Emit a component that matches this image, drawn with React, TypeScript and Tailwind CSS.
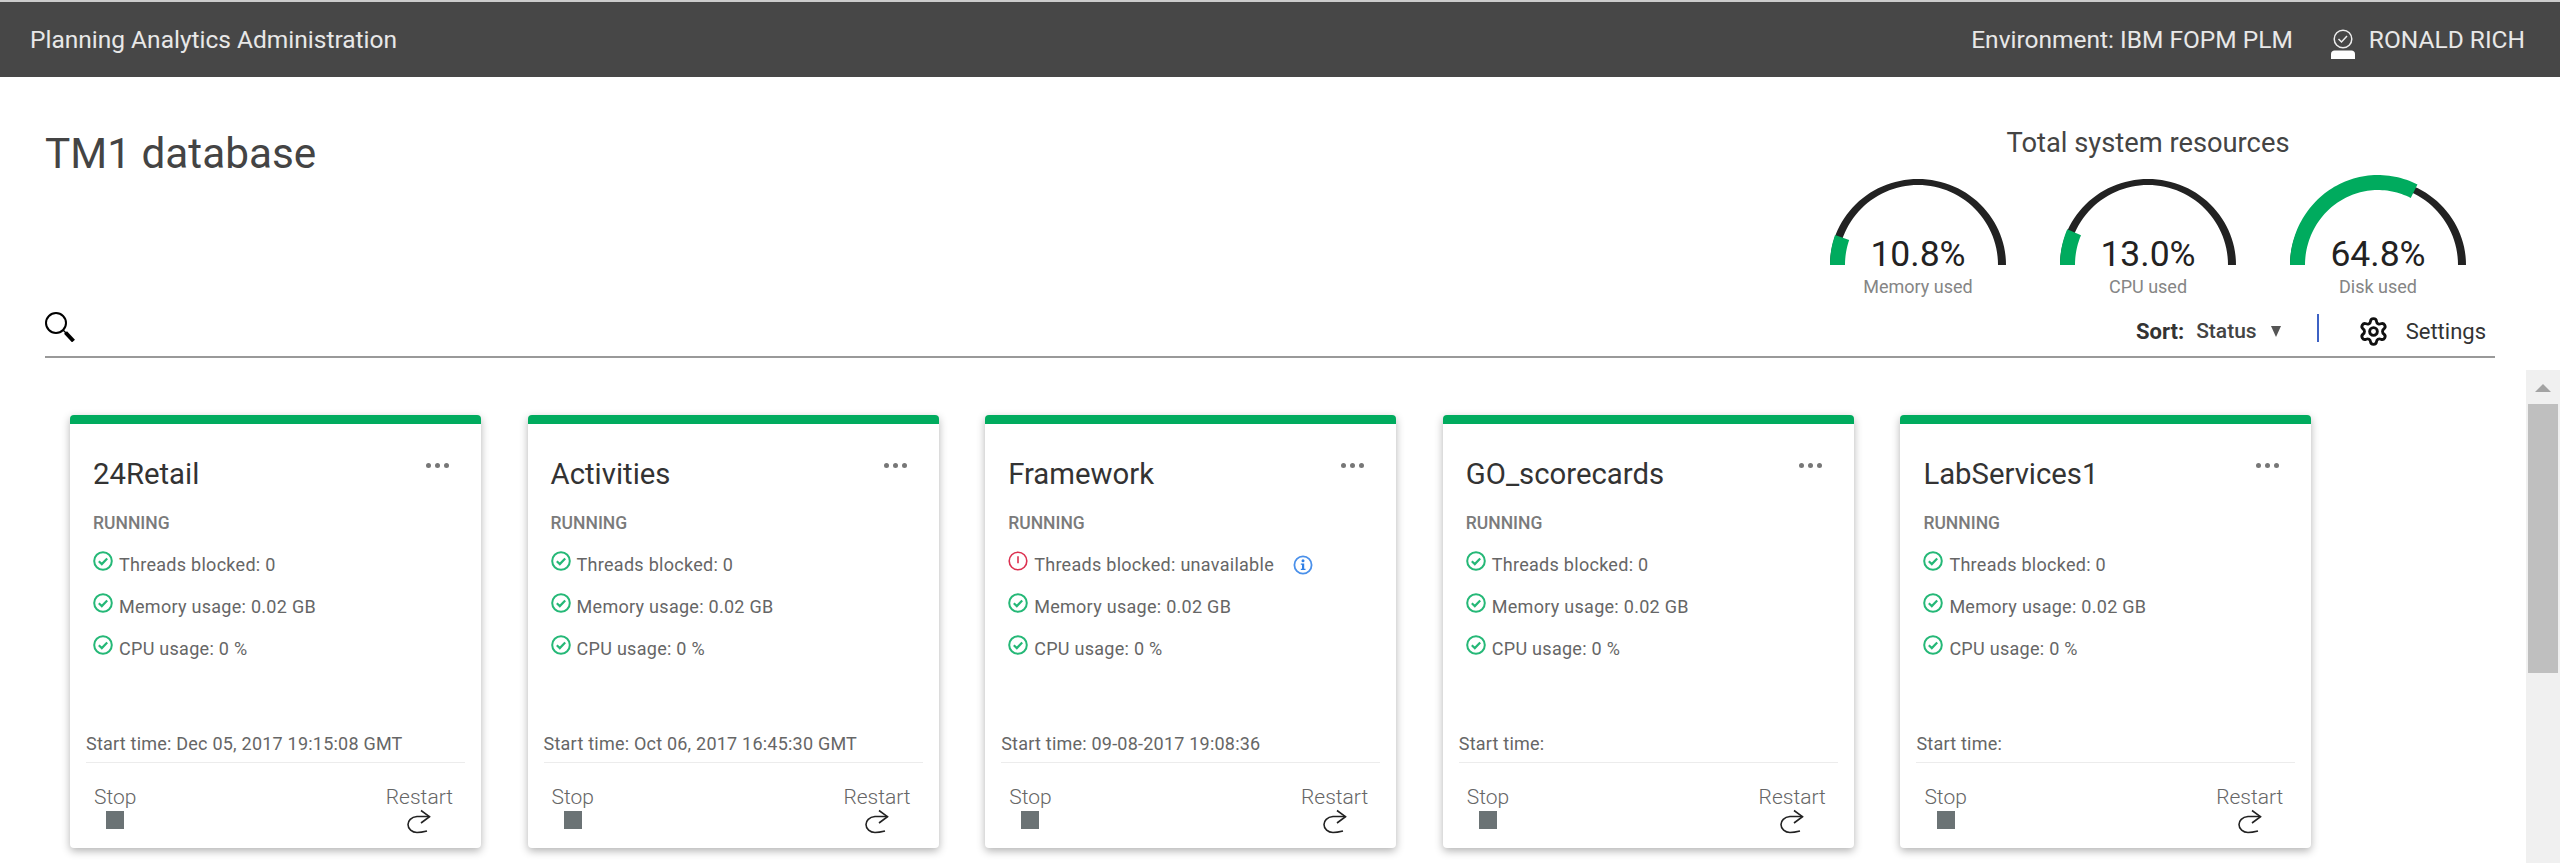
import { Settings } from "lucide-react";

const arcPath = (cx: number, cy: number, rxo: number, ryo: number, rxi: number, ryi: number, frac: number) => {
  const pts: string[] = [];
  const steps = 60;
  for (let i = 0; i <= steps; i++) {
    const a = Math.PI * (1 - (frac * i) / steps);
    pts.push(`${(cx + rxo * Math.cos(a)).toFixed(2)} ${(cy - ryo * Math.sin(a)).toFixed(2)}`);
  }
  for (let i = steps; i >= 0; i--) {
    const a = Math.PI * (1 - (frac * i) / steps);
    pts.push(`${(cx + rxi * Math.cos(a)).toFixed(2)} ${(cy - ryi * Math.sin(a)).toFixed(2)}`);
  }
  return "M" + pts.join("L") + "Z";
};

const Gauge = ({ value, label }: { value: number; label: string }) => (
  <div className="flex w-[230px] flex-col items-center">
    <div className="relative h-[90px] w-[180px]">
      <svg width="180" height="90" viewBox="0 0 180 90">
        <path d={arcPath(90, 90, 88, 86, 80, 80, 1)} fill="#222222" />
        <path d={arcPath(90, 90, 88, 90, 73, 75, value / 100)} fill="#00ab5e" />
      </svg>
      <div className="absolute bottom-[-8px] left-0 w-full text-center text-[35.5px] leading-[38px] text-[#222]">
        {value.toFixed(1)}%
      </div>
    </div>
    <div className="mt-[12px] text-[18px] leading-[20px] text-[#858585]">{label}</div>
  </div>
);

const CheckIcon = () => (
  <svg width="20" height="20" viewBox="0 0 20 20" fill="none" className="shrink-0">
    <circle cx="10" cy="10" r="8.8" stroke="#25b877" strokeWidth="2" />
    <path d="M5.8 10.3l3 2.8 5.400-5.600" stroke="#25b877" strokeWidth="2.200" />
  </svg>
);

const AlertIcon = () => (
  <svg width="20" height="20" viewBox="0 0 20 20" fill="none" className="shrink-0">
    <circle cx="10" cy="10" r="8.8" stroke="#dc3150" strokeWidth="1.6" />
    <path d="M10 5.200v7" stroke="#dc3150" strokeWidth="1.600" />
  </svg>
);

const InfoIcon = () => (
  <svg width="20" height="20" viewBox="0 0 20 20" fill="none" className="ml-[13px] mt-[4px] shrink-0">
    <circle cx="10" cy="10" r="8.6" stroke="#4a90ea" strokeWidth="1.800" />
    <circle cx="10" cy="5.800" r="1.500" fill="#2f7fe6" />
    <path d="M7.800 8.600h3.400v5.200h1.300v1.200H7.800v-1.200h1.200V9.800H7.800z" fill="#2f7fe6" />
  </svg>
);

const RestartIcon = () => (
  <svg width="24" height="26" viewBox="0 0 24 26" fill="none">
    <path d="M22.500 8.500H10C4 9 1 13 1 16.500C1 21 5 24.500 10 24.500C13 24.500 16 24 20 23" stroke="#222" strokeWidth="1.600" />
    <path d="M14 2.500L22.500 8.700L14 15" stroke="#222" strokeWidth="1.600" />
  </svg>
);

type Db = { name: string; start: string; blocked: string; warn?: boolean };

const dbs: Db[] = [
  { name: "24Retail", start: "Start time: Dec 05, 2017 19:15:08 GMT", blocked: "0" },
  { name: "Activities", start: "Start time: Oct 06, 2017 16:45:30 GMT", blocked: "0" },
  { name: "Framework", start: "Start time: 09-08-2017 19:08:36", blocked: "unavailable", warn: true },
  { name: "GO_scorecards", start: "Start time:", blocked: "0" },
  { name: "LabServices1", start: "Start time:", blocked: "0" },
];

const DbCard = ({ db }: { db: Db }) => (
  <div className="flex h-[433px] w-[411px] shrink-0 flex-col rounded-[4px] border-t-[9px] border-[#00ab5e] bg-white shadow-[0_3px_8px_rgba(0,0,0,0.3)]">
    <div className="flex items-start justify-between pl-[23px] pr-[32px] pt-[30px]">
      <div className="text-[29.3px] leading-[40px] text-[#333]">{db.name}</div>
      <div className="mt-[9px] flex gap-[4px]">
        <span className="size-[5px] rounded-full bg-[#777]" />
        <span className="size-[5px] rounded-full bg-[#777]" />
        <span className="size-[5px] rounded-full bg-[#777]" />
      </div>
    </div>
    <div className="mt-[19px] pl-[23px] text-[17.5px] font-medium leading-[20px] text-[#7b7b7b]">RUNNING</div>
    <div className="mt-[18px] flex flex-col gap-[18px] pl-[23px] text-[18px] leading-[21px] tracking-[0.28px] text-[#666]">
      <div className="flex items-start gap-[6px]">
        {db.warn ? <AlertIcon /> : <CheckIcon />}
        <span className="mt-[3px]">Threads blocked: {db.blocked}</span>
        {db.warn && <InfoIcon />}
      </div>
      <div className="flex items-start gap-[6px]">
        <CheckIcon />
        <span className="mt-[3px]">Memory usage: 0.02 GB</span>
      </div>
      <div className="flex items-start gap-[6px]">
        <CheckIcon />
        <span className="mt-[3px]">CPU usage: 0 %</span>
      </div>
    </div>
    <div className="mx-[16px] mt-auto border-b border-[#ececec] pb-[8px] text-[18px] leading-[20px] tracking-[0.22px] text-[#666]">
      {db.start}
    </div>
    <div className="flex justify-between pb-[14px] pl-[24px] pr-[28px] pt-[23px]">
      <div className="flex flex-col items-center">
        <span className="text-[21px] font-light leading-[22px] text-[#666]">Stop</span>
        <span className="mt-[3px] size-[18px] bg-[#6b7375]" />
      </div>
      <div className="flex flex-col items-center">
        <span className="text-[21px] font-light leading-[22px] text-[#666]">Restart</span>
        <RestartIcon />
      </div>
    </div>
  </div>
);

export default function App() {
  return (
    <div className="flex h-[863px] flex-col overflow-hidden bg-white font-['Roboto',sans-serif]">
      <header className="flex h-[77px] shrink-0 items-center justify-between border-t-2 border-[#cccccc] bg-[#474747] pl-[30px] pr-[35px] pt-[2px] text-[24.5px] text-[#e8e8e8]">
        <div>Planning Analytics Administration</div>
        <div className="flex items-center">
          <span>Environment: IBM FOPM PLM</span>
          <svg width="24" height="30" viewBox="0 0 24 30" fill="none" className="ml-[38px] mr-[14px] mt-[6px]">
            <circle cx="12" cy="10" r="8.800" stroke="#eee" strokeWidth="1.500" />
            <path d="M7.500 10l3 3 5.500-6" stroke="#eee" strokeWidth="1.500" />
            <path d="M0 30v-5c0-2 1.500-3.500 3.500-3.500h17c2 0 3.500 1.500 3.500 3.500v5z" fill="#fff" />
          </svg>
          <span>RONALD RICH</span>
        </div>
      </header>

      <section className="flex h-[220px] shrink-0 justify-between pl-[45px] pr-[67px]">
        <h1 className="mt-[50px] text-[42.3px] leading-[54px] text-[#444]">TM1 database</h1>
        <div className="flex flex-col items-center">
          <div className="mt-[51px] text-[27.3px] leading-[30px] text-[#444]">Total system resources</div>
          <div className="mt-[17px] flex">
            <Gauge value={10.8} label="Memory used" />
            <Gauge value={13} label="CPU used" />
            <Gauge value={64.8} label="Disk used" />
          </div>
        </div>
      </section>

      <div className="ml-[45px] mr-[65px] flex h-[61px] shrink-0 items-center justify-between border-b-2 border-[#999]">
        <svg width="30" height="30" viewBox="0 0 30 30" fill="none">
          <circle cx="11" cy="11" r="10" stroke="#000" strokeWidth="2" />
          <path d="M18 18l3 3" stroke="#000" strokeWidth="1.400" />
          <path d="M20.500 20.500l8 8.500" stroke="#000" strokeWidth="4" />
        </svg>
        <div className="mt-[10px] flex items-center pr-[9px] text-[22px] text-[#333]">
          <span className="font-bold">Sort:</span>
          <span className="ml-[12px] text-[21px] font-medium text-[#444]">Status</span>
          <span className="ml-[14px] h-0 w-0 border-x-[5.5px] border-t-[11px] border-x-transparent border-t-[#555]" />
          <span className="ml-[36px] -mt-[8px] h-[28px] w-[2px] bg-[#3d62c4]" />
          <Settings className="ml-[39px] size-[31px]" strokeWidth={2.2} color="#111" />
          <span className="ml-[17px]">Settings</span>
        </div>
      </div>

      <div className="flex min-h-0 flex-1">
        <div className="flex flex-1 gap-[46.6px] pl-[70px] pt-[57px]">
          {dbs.map((db) => (
            <DbCard key={db.name} db={db} />
          ))}
        </div>
        <div className="mt-[12px] flex w-[34px] shrink-0 flex-col items-center bg-[#f0f0f0]">
          <div className="mt-[14px] h-0 w-0 border-x-[8px] border-b-[8px] border-x-transparent border-b-[#a3a3a3]" />
          <div className="mt-[12px] h-[269px] w-[30px] bg-[#bfbfbf]" />
        </div>
      </div>
    </div>
  );
}
